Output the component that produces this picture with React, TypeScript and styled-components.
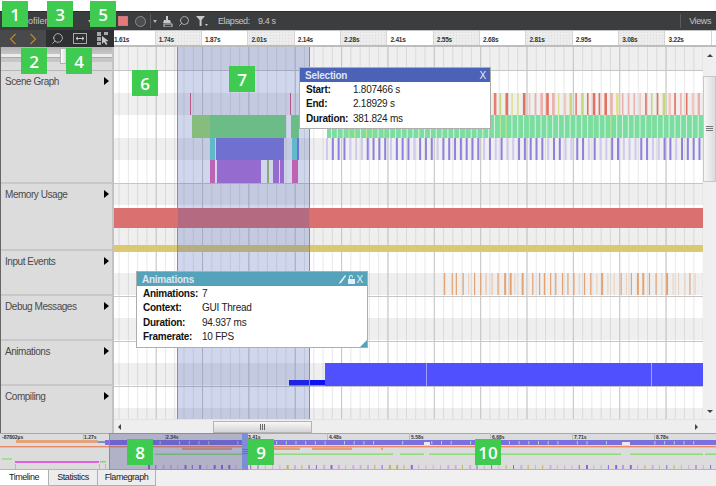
import { ReactNode } from "react"
import styled, { createGlobalStyle } from "styled-components"
import { Search } from "lucide-react"

const FONT = `"Liberation Sans", Arial, sans-serif`

const GlobalStyle = createGlobalStyle`
  html, body {
    margin: 0;
    padding: 0;
    background: #fff;
    font-family: ${FONT};
  }
`

const Page = styled.div`
  position: relative;
  width: 716px;
  height: 486px;
  overflow: hidden;
  padding-top: 11px;
  box-sizing: border-box;
  background: #fff;
`

/* ---- toolbar ---- */

const Toolbar = styled.div`
  height: 19px;
  display: flex;
  align-items: center;
  background: #3c3d3f;
  border-top: 1px solid #2c2c2e;
  box-sizing: border-box;
  color: #c4c6c8;
  font-size: 9px;
  letter-spacing: -0.4px;
`

const ToolTitle = styled.span`
  width: 84px;
  padding-left: 19px;
  box-sizing: border-box;
  color: #c8c8c8;
  font-size: 9px;
  letter-spacing: 0;
`

const ToolCaret = styled.span<{ $m?: string }>`
  width: 0;
  height: 0;
  margin: ${(p) => p.$m ?? "0"};
  border-left: 2.5px solid transparent;
  border-right: 2.5px solid transparent;
  border-top: 3px solid #b0b0b0;
`

const RecordButton = styled.span`
  width: 10px;
  height: 10px;
  margin-left: 26px;
  background: #e27a7c;
  border: 1px solid #c77;
  box-sizing: border-box;
`

const RecordCircle = styled.span`
  width: 11px;
  height: 11px;
  margin-left: 7px;
  border: 1.5px solid #8c8c8c;
  border-radius: 50%;
  background: #4c4d4f;
  box-sizing: border-box;
`

const ToolDivider = styled.span`
  width: 1px;
  height: 14px;
  margin-left: 4px;
  background: #5c5d60;
`

const ToolIcon = styled.svg`
  display: block;
  margin-left: 6px;
  flex: none;
`

const FlippedSearch = styled(Search)<{ $m?: number }>`
  transform: scaleX(-1);
  flex: none;
  margin-left: ${(p) => p.$m ?? 0}px;
`

const Elapsed = styled.span`
  margin-left: 10px;
  width: 40px;
  flex: none;
`

const ViewsLabel = styled.span`
  margin-left: auto;
  padding: 0 5px 0 8px;
  line-height: 14px;
  border-left: 1px solid #5c5d60;
`

/* ---- ruler row ---- */

const RulerRow = styled.div`
  height: 17px;
  display: flex;
`

const NavGroup = styled.div`
  width: 46px;
  display: flex;
  align-items: center;
  justify-content: space-around;
  padding: 0 3px;
  box-sizing: border-box;
  background: #48494b;
`

const ZoomGroup = styled.div`
  width: 68px;
  display: flex;
  align-items: center;
  justify-content: space-around;
  background: #2f3032;
`

const Ruler = styled.div`
  flex: 1;
  display: flex;
  overflow: hidden;
  border-top: 1px solid #c4c4c4;
  border-bottom: 2px solid #bdbdbd;
  box-sizing: border-box;
`

const RulerCell = styled.div<{ $w: number; $shaded: boolean; $pad: number }>`
  width: ${(p) => p.$w}px;
  flex: none;
  box-sizing: border-box;
  padding-left: ${(p) => p.$pad}px;
  border-right: 1px solid #d4d4d4;
  font-size: 6.5px;
  letter-spacing: -0.2px;
  line-height: 18px;
  font-weight: 700;
  color: #333;
  background-color: ${(p) => (p.$shaded ? "#ececec" : "#fff")};
  background-image: ${(p) => (p.$shaded ? "radial-gradient(#dcdcdc 0.5px, transparent 0.6px)" : "none")};
  background-size: 3px 3px;
`

/* ---- main area ---- */

const Main = styled.div`
  display: grid;
  grid-template-columns: 114px 589px 13px;
  grid-template-rows: 372px 14px;
`

const LabelColumn = styled.div`
  grid-row: 1 / 3;
  display: flex;
  flex-direction: column;
  background: #dcdcdc;
  border-left: 1px solid #666;
  border-right: 2px solid #c2c2c2;
  box-sizing: border-box;
`

const SliderRow = styled.div`
  position: relative;
  height: 24px;
  flex: none;
  background: linear-gradient(#b4b4b4, #c6c6c6 30%, #c6c6c6 66%, #dcdcdc 67%);
  border-bottom: 1px dotted #b8b8b8;
  box-sizing: border-box;
`

const SliderGroove = styled.div`
  position: absolute;
  left: 0;
  right: 0;
  top: 7px;
  height: 3px;
  background: #ececec;
  border-bottom: 1px solid #aaa;
`

const SliderHandle = styled.div`
  position: absolute;
  left: 59px;
  top: 1px;
  width: 7px;
  height: 16px;
  border: 1px solid #b0b0b0;
  box-sizing: border-box;
  background: linear-gradient(90deg, #fff, #d8d8d8);
`

const Category = styled.div<{ $h: number; $last?: boolean }>`
  height: ${(p) => p.$h}px;
  flex: none;
  display: flex;
  justify-content: space-between;
  align-items: flex-start;
  padding: 3px 3px 0 4px;
  box-sizing: border-box;
  border-bottom: ${(p) => (p.$last ? "none" : "2px solid #c8c8c8")};
  font-size: 10px;
  letter-spacing: -0.45px;
  line-height: 16px;
  color: #4a4a4a;
`

const CategoryArrow = styled.span`
  width: 0;
  height: 0;
  margin-top: 3px;
  border-top: 4.5px solid transparent;
  border-bottom: 4.5px solid transparent;
  border-left: 5px solid #000;
`

const Chart = styled.div`
  position: relative;
  overflow: hidden;
  background: #fff;
`

const ChartSvg = styled.svg`
  display: block;
`

const SelectionBand = styled.div`
  position: absolute;
  left: 63px;
  top: 0;
  bottom: 0;
  width: 133px;
  box-sizing: border-box;
  border-left: 1px solid #7e8ac8;
  border-right: 1px solid #7e8ac8;
  background: rgba(68, 92, 180, 0.25);
`

const Popup = styled.div<{ $x: number; $y: number; $w: number }>`
  position: absolute;
  left: ${(p) => p.$x}px;
  top: ${(p) => p.$y}px;
  width: ${(p) => p.$w}px;
  box-sizing: border-box;
  background: #fff;
  border: 1px solid #adadad;
  font-size: 10px;
  letter-spacing: -0.25px;
  color: #222;
`

const PopupHeader = styled.div<{ $color: string }>`
  height: 14px;
  display: flex;
  align-items: center;
  gap: 2px;
  padding: 0 4px 0 5px;
  background: ${(p) => p.$color};
  color: #dfe6f0;
  font-size: 10px;
  font-weight: 700;
`

const PopupTitle = styled.span`
  flex: 1;
`

const PopupClose = styled.span`
  font-size: 10px;
  font-weight: 400;
  color: #e8eef6;
`

const PopupGrid = styled.div<{ $label: number }>`
  display: grid;
  grid-template-columns: ${(p) => p.$label}px 1fr;
  grid-auto-rows: 14.4px;
  padding: 1px 6px 2px 6px;
  line-height: 14.4px;
`

const PopupLabel = styled.span`
  font-weight: 700;
  color: #111;
`

const ResizeCorner = styled.span`
  position: absolute;
  right: 0;
  bottom: 0;
  width: 0;
  height: 0;
  border-left: 7px solid transparent;
  border-bottom: 7px solid #55a3bb;
`

const VScroll = styled.div`
  display: flex;
  flex-direction: column;
  align-items: center;
  background: #efefef;
  padding-top: 7px;
`

const ScrollArrow = styled.span<{ $dir: "up" | "down" | "left" | "right" }>`
  width: 0;
  height: 0;
  flex: none;
  ${(p) =>
    p.$dir === "up" || p.$dir === "down"
      ? `border-left: 3px solid transparent; border-right: 3px solid transparent;
         border-${p.$dir === "up" ? "bottom" : "top"}: 3px solid #444;`
      : `border-top: 3px solid transparent; border-bottom: 3px solid transparent;
         border-${p.$dir === "left" ? "right" : "left"}: 3px solid #444;`}
`

const VThumb = styled.div`
  width: 13px;
  height: 106px;
  margin-top: 19px;
  margin-bottom: 228px;
  flex: none;
  display: flex;
  align-items: center;
  justify-content: center;
  box-sizing: border-box;
  border: 1px solid #c8c8c8;
  background: linear-gradient(90deg, #f6f6f6, #dcdcdc);
`

const HScroll = styled.div`
  grid-column: 2 / 4;
  display: flex;
  align-items: center;
  background: #eeeeee;
  border-top: 1px solid #e2e2e2;
  box-sizing: border-box;
  padding-left: 4px;
`

const HThumb = styled.div`
  width: 99px;
  height: 12px;
  margin-left: 92px;
  margin-right: 383px;
  flex: none;
  display: flex;
  align-items: center;
  justify-content: center;
  box-sizing: border-box;
  border: 1px solid #b4b4b4;
  background: linear-gradient(#f8f8f8, #d4d4d4);
`

const Grip = styled.span<{ $vertical?: boolean }>`
  width: ${(p) => (p.$vertical ? "7px" : "6px")};
  height: 6px;
  background: ${(p) =>
    p.$vertical
      ? "repeating-linear-gradient(#777 0 1px, transparent 1px 2px)"
      : "repeating-linear-gradient(90deg, #666 0 1px, transparent 1px 2px)"};
`

/* ---- overview ---- */

const Overview = styled.div`
  position: relative;
  height: 37px;
  background: #dcdcdc;
  overflow: hidden;
`

const OverviewShade = styled.div`
  position: absolute;
  left: 109px;
  top: 0;
  bottom: 0;
  width: 133px;
  background: rgba(68, 72, 150, 0.28);
  border-left: 1px solid #8a8ab0;
  box-sizing: border-box;
`

const OverviewHandle = styled.div`
  position: absolute;
  left: 242px;
  top: 0;
  bottom: 0;
  width: 6px;
  display: flex;
  align-items: center;
  justify-content: center;
  background: #7c8ed8;
`

const OverviewText = styled.text`
  font-family: ${FONT};
  font-size: 5px;
  font-weight: 700;
  fill: #333;
`

/* ---- tabs ---- */

const TabBar = styled.div`
  height: 16px;
  display: flex;
  background: #f0f0f0;
`

const Tab = styled.div<{ $active?: boolean; $w: number }>`
  width: ${(p) => p.$w}px;
  box-sizing: border-box;
  text-align: center;
  font-size: 9px;
  letter-spacing: -0.45px;
  line-height: 15px;
  color: #222;
  background: ${(p) => (p.$active ? "#fff" : "#ededed")};
  border-right: 1px solid #b0b0b0;
  border-bottom: ${(p) => (p.$active ? "1px solid #c8c8c8" : "1px solid #b0b0b0")};
`

/* ---- callouts ---- */

const Badge = styled.div<{ $x: number; $y: number }>`
  position: absolute;
  left: ${(p) => p.$x}px;
  top: ${(p) => p.$y}px;
  width: 26px;
  height: 26px;
  display: flex;
  align-items: center;
  justify-content: center;
  background: #3ecb50;
  color: #fff;
  font-family: "Open Sans", sans-serif;
  font-size: 17px;
  font-weight: 600;
`

/* ---- data ---- */

const RULER = ["1.61s", "1.74s", "1.87s", "2.01s", "2.14s", "2.28s", "2.41s", "2.55s", "2.68s", "2.81s", "2.95s", "3.08s", "3.22s"]

const CATEGORIES: { name: string; h: number }[] = [
  { name: "Scene Graph", h: 113 },
  { name: "Memory Usage", h: 67 },
  { name: "Input Events", h: 45 },
  { name: "Debug Messages", h: 45 },
  { name: "Animations", h: 45 },
  { name: "Compiling", h: 47 },
]

const BADGES: [string, number, number][] = [
  ["1", 2, 1],
  ["3", 47, 1],
  ["5", 90, 1],
  ["2", 21, 48],
  ["4", 66, 48],
  ["6", 132, 70],
  ["7", 229, 66],
  ["8", 127, 439],
  ["9", 248, 439],
  ["10", 475, 439],
]

// stable pseudo random, the bars only need to look like a trace
const hash = (n: number) => {
  const v = Math.sin(n * 12.9898) * 43758.5453
  return v - Math.floor(v)
}

const STRIPES: [number, number][] = [
  [47, 70], [93, 115], [138, 160], [184, 205], [228, 245], [273, 295], [318, 340], [363, 385], [408, 419],
]
const SEPARATORS = [70, 183, 251, 296, 341, 386]

const range = (from: number, to: number, step: number) => {
  const out: number[] = []
  for (let x = from; x < to; x += step) out.push(x)
  return out
}

const Rect = ({ x, y, w, h, c }: { x: number; y: number; w: number; h: number; c: string }) => (
  <rect x={x} y={y} width={w} height={h} fill={c} />
)

const TimelineChart = () => {
  const redColors = ["#eeb0ac", "#e4705f", "#c8d878", "#f0c8c0", "#dfe090", "#e77c70"]
  return (
    <ChartSvg width={589} height={372} viewBox="114 47 589 372">
      {STRIPES.map(([a, b]) => <Rect key={a} x={114} y={a} w={589} h={b - a} c="#efefef" />)}
      {range(118.6, 703, 9.27).map((x) => <Rect key={x} x={x} y={47} w={1} h={372} c="rgba(0,0,0,0.09)" />)}
      {range(155.7, 703, 46.35).map((x) => <Rect key={x} x={x} y={47} w={1} h={372} c="#c6c6c6" />)}
      {SEPARATORS.map((y) => <Rect key={y} x={114} y={y} w={589} h={1} c="#c6c6c6" />)}

      {/* scene graph */}
      <Rect x={190} y={93} w={1} h={22} c="#e0507a" />
      <Rect x={290} y={93} w={1} h={22} c="#e0507a" />
      {range(488, 701, 5.82).map((x, i) => (
        <Rect key={x} x={x} y={93} w={hash(i) > 0.5 ? 2.6 : 1.6} h={22} c={redColors[Math.floor(hash(i + 40) * 6)]} />
      ))}
      <Rect x={192} y={115} w={18} h={23} c="#9dde6b" />
      <Rect x={210} y={115} w={76} h={23} c="#78dc78" />
      <Rect x={291} y={115} w={8} h={23} c="#78dc78" />
      <Rect x={327} y={115} w={376} h={23} c="#7ddda0" />
      {range(331, 703, 5.82).map((x, i) => (
        <Rect key={x} x={x} y={115} w={1} h={23} c={hash(i + 7) > 0.8 ? "#c8e890" : "#d4f4e0"} />
      ))}
      <Rect x={210} y={138} w={5} h={22} c="#68d8cf" />
      <Rect x={216} y={138} w={68} h={22} c="#7e77d9" />
      <Rect x={292} y={138} w={5} h={22} c="#68d8cf" />
      <Rect x={297} y={138} w={2} h={22} c="#7e77d9" />
      {range(326, 701, 5.82).map((x, i) => (
        <Rect key={x} x={x} y={138} w={2} h={22} c={hash(i + 90) > 0.75 ? "#cfcaef" : "#8e80de"} />
      ))}
      <Rect x={210} y={160} w={5} h={23} c="#e766b4" />
      <Rect x={217} y={160} w={44} h={23} c="#b171d9" />
      <Rect x={267} y={160} w={2} h={23} c="#a8c060" />
      <Rect x={273} y={160} w={6} h={23} c="#b171d9" />
      <Rect x={280} y={160} w={4} h={23} c="#b171d9" />
      <Rect x={292} y={160} w={6} h={23} c="#e766b4" />

      {/* memory */}
      <Rect x={114} y={208} w={589} h={20} c="#da7070" />
      <Rect x={114} y={245} w={589} h={6} c="#dcc870" />

      {/* input events */}
      {range(444, 698, 5.82).map((x, i) => (
        <Rect
          key={x}
          x={x + hash(i) * 2}
          y={273}
          w={hash(i + 3) > 0.8 ? 2 : 1.2}
          h={22}
          c={hash(i + 20) > 0.3 ? "#e3a273" : "#eed4c0"}
        />
      ))}

      {/* animations */}
      <Rect x={289} y={380} w={36} h={5.5} c="#1010f4" />
      <Rect x={325} y={363} w={378} h={23} c="#5050ff" />
      <Rect x={426} y={363} w={1} h={23} c="#a0a0ff" />
      <Rect x={651} y={363} w={1} h={23} c="#a0a0ff" />
    </ChartSvg>
  )
}

const OverviewChart = () => {
  const labels: [string, number][] = [
    ["-87802\u00b5s", 2], ["1.27s", 84], ["2.34s", 166], ["3.41s", 248], ["4.48s", 329],
    ["5.58s", 411], ["6.68s", 492], ["7.71s", 574], ["8.78s", 656],
  ]
  return (
    <ChartSvg width={716} height={37} viewBox="0 433 716 37">
      <Rect x={0} y={433} w={716} h={1} c="#a8a8a8" />
      {[83, 165, 247, 327, 409, 490, 572, 654].map((x) => <Rect key={x} x={x} y={433} w={1} h={7} c="#bbb" />)}
      {labels.map(([t, x]) => <OverviewText key={t} x={x} y={439}>{t}</OverviewText>)}

      <Rect x={16} y={440} w={82} h={3} c="#e2a478" />
      <Rect x={98} y={441} w={8} h={2} c="#7c8ed8" />
      <Rect x={105} y={440} w={611} h={5} c="#7a70e0" />
      {range(150, 716, 9.7).map((x, i) => (
        hash(i) > 0.35 ? <Rect key={x} x={x} y={441} w={1} h={3.5} c="#9ae0b0" /> : null
      ))}
      <Rect x={424} y={442} w={6} h={3} c="#f0e8f0" />
      <Rect x={622} y={442} w={8} h={3} c="#f0e8f0" />
      <Rect x={0} y={446} w={716} h={1.4} c="#e88a68" />

      {[[182, 50], [273, 27], [312, 40], [381, 2]].map(([x, w]) => <Rect key={x} x={x} y={447.5} w={w} h={2.5} c="#e2a078" />)}
      {[[155, 238], [400, 24], [429, 46], [501, 120], [630, 73], [705, 11]].map(([x, w]) => (
        <Rect key={x} x={x} y={453.5} w={w} h={1.4} c="#86dc70" />
      ))}

      <Rect x={2} y={458} w={10} h={2} c="#a0e090" />
      <Rect x={15} y={461} w={84} h={2} c="#e060e0" />
      <Rect x={100} y={461} w={6} h={1.5} c="#70e070" />
      <Rect x={15} y={464} w={1} h={5} c="#e0a0e0" />
      <Rect x={99} y={464} w={1} h={5} c="#e0a0e0" />
      <Rect x={105} y={464} w={1} h={5} c="#e0a0e0" />

      {range(148, 716, 7.3).map((x, i) => (
        <Rect
          key={x}
          x={x}
          y={465}
          w={hash(i + 11) > 0.5 ? 2 : 1}
          h={5}
          c={hash(i + 30) > 0.55 ? "#9a5ee0" : hash(i + 30) > 0.12 ? "#d6a8e8" : "#c8b060"}
        />
      ))}
      <Rect x={0} y={469} w={716} h={1} c="#b4b4b4" />
    </ChartSvg>
  )
}

const Chevron = ({ left }: { left?: boolean }) => (
  <svg width="8" height="12" viewBox="0 0 8 12">
    <path d={left ? "M6.5 1 L1.5 6 L6.5 11" : "M1.5 1 L6.5 6 L1.5 11"} fill="none" stroke="#c0882c" strokeWidth="1.2" />
  </svg>
)

const FitIcon = () => (
  <svg width="14" height="11" viewBox="0 0 14 11">
    <rect x="0.5" y="0.5" width="13" height="10" fill="none" stroke="#a8a8a8" />
    <path d="M3 5.5 H11 M3 5.5 L5 3.8 M3 5.5 L5 7.2 M11 5.5 L9 3.8 M11 5.5 L9 7.2" stroke="#c8c8c8" fill="none" />
  </svg>
)

const SelectIcon = () => (
  <svg width="12" height="13" viewBox="0 0 12 13">
    <path d="M0 0 H4 V4 H0 Z M0 5 H4 V9 H0 Z M0 10 H4 V13 H0 Z M7 0 H11 V3 H7 Z" fill="#a8a8a8" />
    <path d="M5 4 L5 12 L7 10 L9 13 L10.5 12 L8.6 9.4 L11.5 9 Z" fill="#c8c8c8" />
  </svg>
)

const PopupRow = ({ label, children }: { label: string; children: ReactNode }) => (
  <>
    <PopupLabel>{label}</PopupLabel>
    <span>{children}</span>
  </>
)

export default function App() {
  return (
    <Page>
      <GlobalStyle />
      <Toolbar>
        <ToolTitle>Profiler</ToolTitle>
        <ToolCaret $m="0 0 0 4px" />
        <RecordButton />
        <RecordCircle />
        <ToolDivider />
        <ToolCaret $m="0 0 0 2px" />
        <ToolIcon width="10" height="11" viewBox="0 0 10 11">
          <path d="M3 0 H5 V4 H7 L8 7 H0 L1 4 H3 Z" fill="#c8c8c8" />
          <rect x="1" y="8" width="8" height="3" fill="none" stroke="#c8c8c8" />
        </ToolIcon>
        <FlippedSearch size={12} color="#c8c8c8" strokeWidth={1.6} $m={5} />
        <ToolIcon width="12" height="10" viewBox="0 0 12 10">
          <path d="M0 0 H9 L5.6 4 V10 H3.6 V4 Z" fill="#c8c8c8" />
          <path d="M9 8 H12 L10.5 10 Z" fill="#c8c8c8" />
        </ToolIcon>
        <Elapsed>Elapsed:</Elapsed>
        <span>9.4 s</span>
        <ViewsLabel>Views</ViewsLabel>
      </Toolbar>

      <RulerRow>
        <NavGroup>
          <Chevron left />
          <Chevron />
        </NavGroup>
        <ZoomGroup>
          <FlippedSearch size={13} color="#c8c8c8" strokeWidth={1.5} />
          <FitIcon />
          <SelectIcon />
        </ZoomGroup>
        <Ruler>
          {RULER.map((t, i) => (
            <RulerCell key={t} $w={i === 0 ? 41.7 : 46.35} $shaded={i % 2 === 1} $pad={i === 0 ? 0 : 3}>
              {t}
            </RulerCell>
          ))}
        </Ruler>
      </RulerRow>

      <Main>
        <LabelColumn>
          <SliderRow>
            <SliderGroove />
            <SliderHandle />
          </SliderRow>
          {CATEGORIES.map((c, i) => (
            <Category key={c.name} $h={c.h} $last={i === CATEGORIES.length - 1}>
              {c.name}
              <CategoryArrow />
            </Category>
          ))}
        </LabelColumn>

        <Chart>
          <TimelineChart />
          <SelectionBand />
          <Popup $x={185} $y={20} $w={192}>
            <PopupHeader $color="#4a62b8">
              <PopupTitle>Selection</PopupTitle>
              <PopupClose>X</PopupClose>
            </PopupHeader>
            <PopupGrid $label={47}>
              <PopupRow label="Start:">1.807466 s</PopupRow>
              <PopupRow label="End:">2.18929 s</PopupRow>
              <PopupRow label="Duration:">381.824 ms</PopupRow>
            </PopupGrid>
          </Popup>
          <Popup $x={22} $y={224} $w={232}>
            <PopupHeader $color="#55a3bb">
              <PopupTitle>Animations</PopupTitle>
              <svg width="7" height="9" viewBox="0 0 7 9">
                <path d="M6 0 L7 1 L2 8 L0 9 L0.6 7 Z" fill="#e8eef6" />
              </svg>
              <svg width="7" height="9" viewBox="0 0 7 9">
                <path d="M1 4 V2 A2 2 0 0 1 5 2 V2.6 H4 V2 A1 1 0 0 0 2 2 V4 H7 V9 H0 V4 Z" fill="#e8eef6" />
              </svg>
              <PopupClose>X</PopupClose>
            </PopupHeader>
            <PopupGrid $label={59}>
              <PopupRow label="Animations:">7</PopupRow>
              <PopupRow label="Context:">GUI Thread</PopupRow>
              <PopupRow label="Duration:">94.937 ms</PopupRow>
              <PopupRow label="Framerate:">10 FPS</PopupRow>
            </PopupGrid>
            <ResizeCorner />
          </Popup>
        </Chart>

        <VScroll>
          <ScrollArrow $dir="up" />
          <VThumb>
            <Grip $vertical />
          </VThumb>
          <ScrollArrow $dir="down" />
        </VScroll>

        <HScroll>
          <ScrollArrow $dir="left" />
          <HThumb>
            <Grip />
          </HThumb>
          <ScrollArrow $dir="right" />
        </HScroll>
      </Main>

      <Overview>
        <OverviewChart />
        <OverviewShade />
        <OverviewHandle>
          <Grip $vertical />
        </OverviewHandle>
      </Overview>

      <TabBar>
        <Tab $active $w={49}>Timeline</Tab>
        <Tab $w={49}>Statistics</Tab>
        <Tab $w={58}>Flamegraph</Tab>
      </TabBar>

      {BADGES.map(([n, x, y]) => (
        <Badge key={n} $x={x} $y={y}>{n}</Badge>
      ))}
    </Page>
  )
}
